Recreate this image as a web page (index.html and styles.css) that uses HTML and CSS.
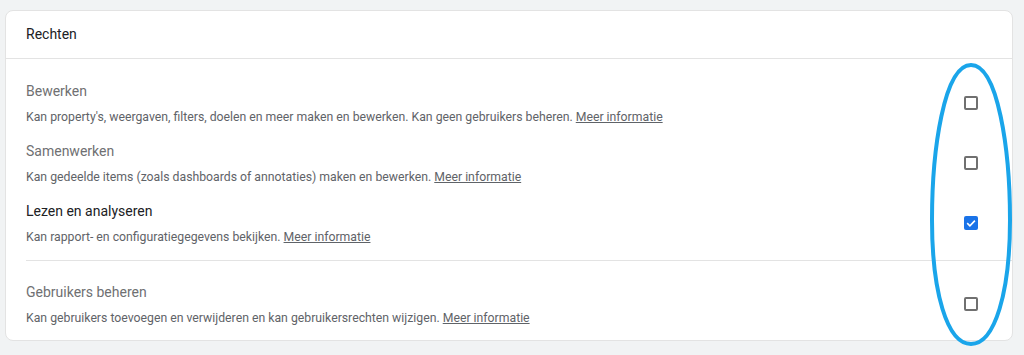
FILE: index.html
```html
<!DOCTYPE html>
<html lang="nl">
<head>
  <meta charset="UTF-8" />
  <meta name="viewport" content="width=device-width, initial-scale=1.0" />
  <title>Rechten</title>
  <link rel="stylesheet" href="styles.css">
</head>
<body>
  <div class="page">
    <section class="card">
      <header class="card-header">Rechten</header>
      <div class="card-body">
        <div class="role">
          <div class="role-text">
            <div class="role-title">Bewerken</div>
            <div class="role-desc">Kan property's, weergaven, filters, doelen en meer maken en bewerken. Kan geen gebruikers beheren. <a href="#">Meer informatie</a></div>
          </div>
          <span class="checkbox"></span>
        </div>
        <div class="role">
          <div class="role-text">
            <div class="role-title">Samenwerken</div>
            <div class="role-desc">Kan gedeelde items (zoals dashboards of annotaties) maken en bewerken. <a href="#">Meer informatie</a></div>
          </div>
          <span class="checkbox"></span>
        </div>
        <div class="role active">
          <div class="role-text">
            <div class="role-title">Lezen en analyseren</div>
            <div class="role-desc">Kan rapport- en configuratiegegevens bekijken. <a href="#">Meer informatie</a></div>
          </div>
          <span class="checkbox checked">
            <svg viewBox="0 0 14 14" width="14" height="14"><path d="M3.2 7.2 L5.9 9.8 L10.9 4.6" fill="none" stroke="#fff" stroke-width="1.6"/></svg>
          </span>
        </div>
      </div>
      <div class="card-body extra">
        <div class="role">
          <div class="role-text">
            <div class="role-title">Gebruikers beheren</div>
            <div class="role-desc">Kan gebruikers toevoegen en verwijderen en kan gebruikersrechten wijzigen. <a href="#">Meer informatie</a></div>
          </div>
          <span class="checkbox"></span>
        </div>
      </div>
    </section>
    <svg class="annotation" viewBox="0 0 92 290" width="92" height="290">
      <path d="M46,5 C73,5 85,90 85,160 C85,232 70,284 46,284 C22,284 7,232 7,160 C7,90 19,5 46,5 Z" fill="none" stroke="#1aa5ea" stroke-width="4"/>
    </svg>
  </div>
</body>
</html>
```

FILE: styles.css
```css
body {
  margin: 0;
  background: #f1f3f4;
  font-family: Roboto, "Liberation Sans", Arial, sans-serif;
  color: #202124;
}
.page {
  position: relative;
  padding: 10px 11px 14px 5px;
}
.card {
  background: #fff;
  border: 1px solid #e3e3e3;
  border-radius: 8px;
  height: 331px;
  box-sizing: border-box;
  overflow: hidden;
}
.card-header {
  height: 47px;
  line-height: 47px;
  padding-left: 20px;
  font-size: 14px;
  color: #202124;
  border-bottom: 1px solid #e3e3e3;
}
.card-body {
  padding: 22px 0 0 20px;
}
.card-body .role:last-child {
  padding-bottom: 15px;
}
.card-body.extra {
  padding-top: 0;
}
.card-body.extra .role {
  border-top: 1px solid #e3e3e3;
  padding-top: 21px;
}
.role {
  display: flex;
  align-items: center;
  justify-content: space-between;
  padding-right: 34px;
  padding-bottom: 16px;
}
.role-title {
  font-size: 14px;
  line-height: 20px;
  color: #6f7072;
  margin-bottom: 8px;
}
.role.active .role-title {
  color: #202124;
}
.role-desc {
  font-size: 12.25px;
  line-height: 16px;
  color: #5f6368;
}
.role-desc a {
  color: #5f6368;
  text-decoration: underline;
}
.checkbox {
  width: 14px;
  height: 14px;
  box-sizing: border-box;
  border: 2px solid #707070;
  border-radius: 2px;
  flex-shrink: 0;
  display: block;
}
.checkbox.checked {
  border: none;
  background: #1a73e8;
}
.checkbox svg {
  display: block;
}
.annotation {
  position: absolute;
  left: 925px;
  top: 60px;
}
```
